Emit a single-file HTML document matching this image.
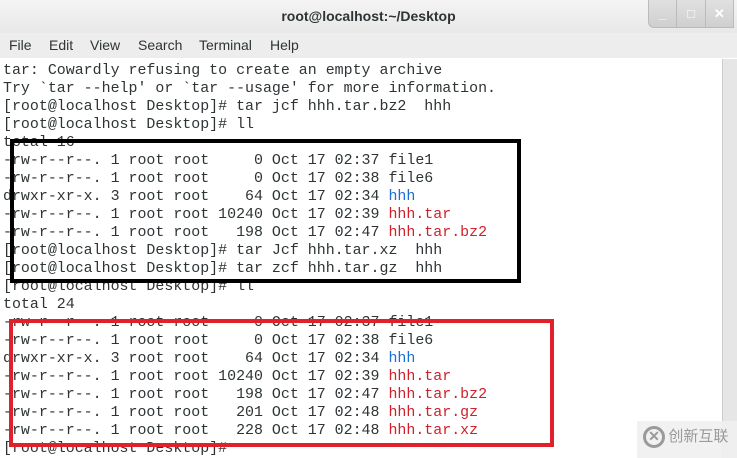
<!DOCTYPE html>
<html><head><meta charset="utf-8"><style>
*{margin:0;padding:0;box-sizing:border-box}
body{width:737px;height:458px;overflow:hidden;background:#fff;position:relative;font-family:"Liberation Sans",sans-serif}
#title{position:absolute;left:0;top:0;width:737px;height:33px;background:linear-gradient(#f4f4f4,#e8e8e8);text-align:center;font-size:14px;font-weight:bold;color:#2e3436;line-height:33px}
#btns{position:absolute;left:648px;top:0;width:86px;height:28px;background:linear-gradient(#e0e0e0,#cfcfcf);border:1px solid #bbb;border-top:none;border-radius:0 0 0 6px;display:flex}
#btns div{flex:1;border-left:1px solid #bbb;color:#fff;font-size:13px;text-align:center;line-height:28px;font-weight:bold}
#btns div:first-child{border-left:none}
#menu{position:absolute;left:0;top:33px;width:737px;height:25px;background:#ededed;font-size:14px;color:#2e3436;line-height:25px}
#menu span{position:absolute}
#term{position:absolute;left:0;top:59px;width:722px;height:399px;background:#fff}
#sb{position:absolute;left:722px;top:59px;width:15px;height:399px;background:#e6e6e6;border-left:1px solid #ccc}
pre{position:absolute;left:3px;top:62px;font-family:"Liberation Mono","DejaVu Sans Mono",monospace;font-size:14.95px;line-height:18px;color:#2e3436}
.b{color:#1a6fd4}.r{color:#d0202a}
.box{position:absolute}
</style></head><body>
<div id="title">root@localhost:~/Desktop</div>
<div id="btns"><div>_</div><div>□</div><div>✕</div></div>
<div id="menu"><span style="left:9px">File</span><span style="left:49px">Edit</span><span style="left:90px">View</span><span style="left:138px">Search</span><span style="left:199px">Terminal</span><span style="left:270px">Help</span></div>
<div id="term"></div><div id="sb"></div>
<pre>tar: Cowardly refusing to create an empty archive
Try `tar --help' or `tar --usage' for more information.
[root@localhost Desktop]# tar jcf hhh.tar.bz2  hhh
[root@localhost Desktop]# ll
total 16
-rw-r--r--. 1 root root     0 Oct 17 02:37 file1
-rw-r--r--. 1 root root     0 Oct 17 02:38 file6
drwxr-xr-x. 3 root root    64 Oct 17 02:34 <span class="b">hhh</span>
-rw-r--r--. 1 root root 10240 Oct 17 02:39 <span class="r">hhh.tar</span>
-rw-r--r--. 1 root root   198 Oct 17 02:47 <span class="r">hhh.tar.bz2</span>
[root@localhost Desktop]# tar Jcf hhh.tar.xz  hhh
[root@localhost Desktop]# tar zcf hhh.tar.gz  hhh
[root@localhost Desktop]# ll
total 24
-rw-r--r--. 1 root root     0 Oct 17 02:37 file1
-rw-r--r--. 1 root root     0 Oct 17 02:38 file6
drwxr-xr-x. 3 root root    64 Oct 17 02:34 <span class="b">hhh</span>
-rw-r--r--. 1 root root 10240 Oct 17 02:39 <span class="r">hhh.tar</span>
-rw-r--r--. 1 root root   198 Oct 17 02:47 <span class="r">hhh.tar.bz2</span>
-rw-r--r--. 1 root root   201 Oct 17 02:48 <span class="r">hhh.tar.gz</span>
-rw-r--r--. 1 root root   228 Oct 17 02:48 <span class="r">hhh.tar.xz</span>
[root@localhost Desktop]#</pre>
<div class="box" style="left:10px;top:139px;width:511px;height:144px;border:4px solid #000"></div>
<div class="box" style="left:9px;top:319px;width:545px;height:128px;border:4px solid #e0202a"></div>
<div style="position:absolute;left:637px;top:421px;width:100px;height:37px;background:rgba(240,240,240,.9);font-family:'Noto Sans CJK SC',sans-serif;color:#9a9a9a;font-size:15px;line-height:30px;padding-left:6px">
<span style="display:inline-block;width:22px;height:22px;border:3px solid #9a9a9a;border-radius:50%;vertical-align:middle;text-align:center;line-height:14px;font-size:14px;font-weight:bold">✕</span> 创新互联</div>
</body></html>
